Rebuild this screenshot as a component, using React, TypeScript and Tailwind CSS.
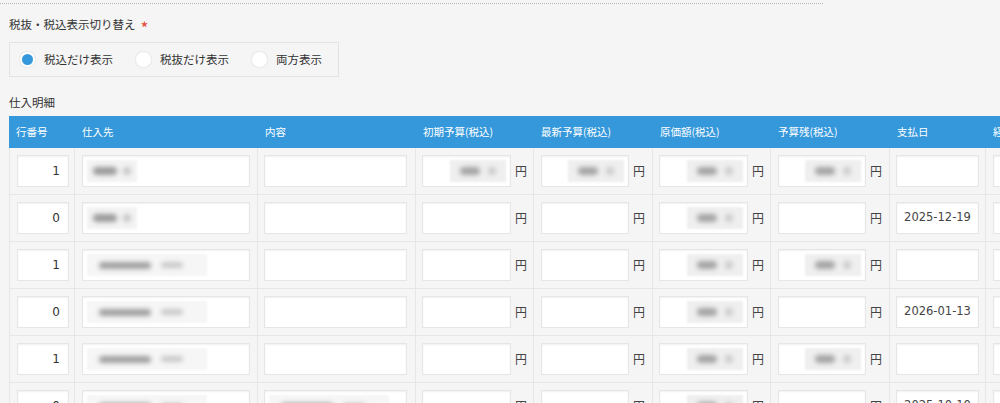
import React from 'react';

type Cell = 'short' | 'long' | '';

interface Row {
  no: number;
  vendor: Cell;
  content: Cell;
  initial: boolean;
  latest: boolean;
  cost: boolean;
  remain: boolean;
  date: string;
}

const rows: Row[] = [
  { no: 1, vendor: 'short', content: '', initial: true, latest: true, cost: true, remain: true, date: '' },
  { no: 0, vendor: 'short', content: '', initial: false, latest: false, cost: true, remain: false, date: '2025-12-19' },
  { no: 1, vendor: 'long', content: '', initial: false, latest: false, cost: true, remain: true, date: '' },
  { no: 0, vendor: 'long', content: '', initial: false, latest: false, cost: true, remain: false, date: '2026-01-13' },
  { no: 1, vendor: 'long', content: '', initial: false, latest: false, cost: true, remain: true, date: '' },
  { no: 0, vendor: 'long', content: 'long', initial: false, latest: false, cost: true, remain: false, date: '2025-10-10' },
];

const font = { fontFamily: '"Noto Sans CJK JP", "Noto Sans", sans-serif' };
const num = { fontFamily: '"DejaVu Sans", sans-serif' };

const cols = 'grid grid-cols-[66px_183px_158px_118px_119px_118px_119px_96px_120px]';

function Blur({ kind }: { kind: 'short' | 'long' | 'amount' }) {
  if (kind === 'short') {
    return (
      <div className="flex items-center gap-[6px] px-[6px] h-[22px] bg-[#f3f3f3] blur-[1px]">
        <span className="w-[24px] h-[8px] rounded-full bg-[#9a9a9a] blur-[2px]" />
        <span className="w-[8px] h-[8px] rounded-full bg-[#c4c4c4] blur-[2px]" />
      </div>
    );
  }
  if (kind === 'long') {
    return (
      <div className="flex items-center gap-[10px] px-[12px] h-[22px] w-[120px] bg-[#f6f6f6] blur-[1px]">
        <span className="w-[52px] h-[7px] rounded-full bg-[#9f9f9f] blur-[2px]" />
        <span className="w-[22px] h-[6px] rounded-full bg-[#c8c8c8] blur-[2px]" />
      </div>
    );
  }
  return (
    <div className="flex items-center gap-[8px] px-[10px] h-[22px] bg-[#efefef] blur-[1px]">
      <span className="w-[20px] h-[8px] rounded-full bg-[#a4a4a4] blur-[2px]" />
      <span className="w-[8px] h-[8px] rounded-full bg-[#cacaca] blur-[2px]" />
    </div>
  );
}

function Input({ className, children }: { className?: string; children?: React.ReactNode }) {
  return (
    <div
      className={`h-[32px] bg-white border border-[#e6e6e6] shadow-[inset_0_1px_2px_rgba(0,0,0,0.06)] flex items-center ${className ?? ''}`}
    >
      {children}
    </div>
  );
}

function Amount({ filled }: { filled: boolean }) {
  return (
    <div className="flex items-center">
      <Input className="w-[90px] justify-end pr-[4px]">{filled && <Blur kind="amount" />}</Input>
      <span className="ml-[4px] text-[12px] text-[#444]">円</span>
    </div>
  );
}

function Radio({ checked, label }: { checked?: boolean; label: string }) {
  return (
    <label className="flex items-center gap-[8px]">
      <span className="w-[17px] h-[17px] rounded-full bg-white border border-[#ececec] shadow-[0_0_1px_rgba(0,0,0,0.08)] flex items-center justify-center">
        {checked && <span className="w-[11px] h-[11px] rounded-full bg-[#3498db]" />}
      </span>
      <span className="text-[11.5px] text-[#333]">{label}</span>
    </label>
  );
}

const headers = ['行番号', '仕入先', '内容', '初期予算(税込)', '最新予算(税込)', '原価額(税込)', '予算残(税込)', '支払日', '経費区分'];

const td = 'border-r border-b border-[#e6e6e6] pt-[7px]';

export default function App() {
  return (
    <div className="w-[1000px] h-[403px] overflow-hidden bg-[#f5f5f5]" style={font}>
      <div className="pt-[3px]">
        <div className="w-[823px] border-t border-dotted border-[#b5b5b5]" />
      </div>

      <div className="pl-[9px]">
        {/* tax display toggle */}
        <div className="mt-[13px] flex items-center h-[16px] text-[11.5px] text-[#333]">
          <span>税抜・税込表示切り替え</span>
          <span className="ml-[5px] text-[#e74c3c] text-[17px] leading-none pt-[5px]">*</span>
        </div>
        <div className="mt-[9px] w-[330px] h-[35px] border border-[#e3e3e3] flex items-center gap-[22px] pl-[9px]">
          <Radio checked label="税込だけ表示" />
          <Radio label="税抜だけ表示" />
          <Radio label="両方表示" />
        </div>

        {/* purchase detail */}
        <div className="mt-[17px] text-[11.5px] text-[#333] leading-[16px]">仕入明細</div>
        <div className="mt-[6px] w-[1120px]">
          <div className={`${cols} bg-[#3498db] h-[32px] items-center`}>
            {headers.map((h) => (
              <div key={h} className="px-[7px] text-[10.5px] text-white whitespace-nowrap">
                {h}
              </div>
            ))}
          </div>
          {rows.map((r, i) => (
            <div key={i} className={`${cols} h-[47px]`}>
              <div className={`${td} border-l px-[7px]`}>
                <Input className="w-[52px] justify-end pr-[8px] text-[12px] text-[#333]">
                  <span style={num}>{r.no}</span>
                </Input>
              </div>
              <div className={`${td} px-[7px]`}>
                <Input className="w-[168px] pl-[4px]">
                  {r.vendor === 'short' && <Blur kind="short" />}
                  {r.vendor === 'long' && <Blur kind="long" />}
                </Input>
              </div>
              <div className={`${td} px-[6px]`}>
                <Input className="w-[143px] pl-[4px]">{r.content === 'long' && <Blur kind="long" />}</Input>
              </div>
              <div className={`${td} px-[6px]`}>
                <Amount filled={r.initial} />
              </div>
              <div className={`${td} px-[7px]`}>
                <Amount filled={r.latest} />
              </div>
              <div className={`${td} px-[6px]`}>
                <Amount filled={r.cost} />
              </div>
              <div className={`${td} px-[7px]`}>
                <Amount filled={r.remain} />
              </div>
              <div className={`${td} px-[6px]`}>
                <Input className="w-[83px] justify-center text-[11.5px] text-[#444]">
                  <span style={num}>{r.date}</span>
                </Input>
              </div>
              <div className={`${td} px-[7px]`}>
                <Input className="w-[100px]" />
              </div>
            </div>
          ))}
        </div>
      </div>
    </div>
  );
}
